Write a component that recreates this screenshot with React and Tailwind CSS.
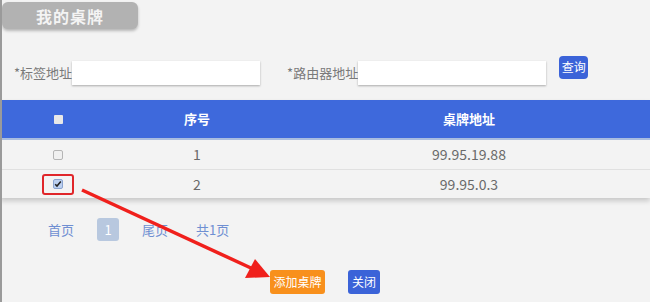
import React from "react";

export default function App() {
  const font = { fontFamily: '"Noto Sans CJK SC", "Noto Sans", sans-serif' };
  return (
    <div
      className="relative w-[650px] h-[302px] overflow-hidden bg-[#f3f3f3] border-l-2 border-[#9a9a9a]"
      style={font}
    >
      {/* title tab */}
      <div className="pt-[2px]">
        <div className="w-[136px] h-[27px] rounded-[6px] bg-[#b2b2b2] shadow-[0_2px_3px_rgba(0,0,0,0.25)] flex items-center justify-center">
          <span className="text-[16px] font-bold text-[#f4f4f4] leading-none tracking-[1px]">我的桌牌</span>
        </div>
      </div>

      {/* search row */}
      <div className="flex items-center mt-[28px] pl-[12px] h-[30px]">
        <span className="text-[13px] text-[#7a7a7a] leading-none">*标签地址</span>
        <div className="w-[188px] h-[24px] bg-white shadow-[0_1px_2px_rgba(0,0,0,0.3)] mt-[2px]" />
        <span className="ml-[27px] text-[13px] text-[#7a7a7a] leading-none">*路由器地址</span>
        <div className="w-[188px] h-[24px] bg-white shadow-[0_1px_2px_rgba(0,0,0,0.3)] mt-[2px]" />
        <div className="ml-[13px] -mt-[10px] w-[29px] h-[23px] rounded-[4px] bg-[#3b63d8] flex items-center justify-center">
          <span className="text-[12px] text-white leading-none">查询</span>
        </div>
      </div>

      {/* table */}
      <div className="mt-[13px] -ml-[2px] shadow-[0_3px_5px_rgba(0,0,0,0.18)]">
        <div className="grid grid-cols-[116px_162px_1fr] h-[40px] bg-[#3e69dc] items-center border-b-2 border-[#a9bde0]">
          <div className="flex justify-center">
            <div className="w-[9px] h-[9px] bg-[#e8e8e8] rounded-[1px]" />
          </div>
          <div className="text-center text-[13px] font-bold text-white">序号</div>
          <div className="text-center text-[13px] font-bold text-white pl-[10px]">桌牌地址</div>
        </div>
        <div className="grid grid-cols-[116px_162px_1fr] h-[30px] items-center bg-[#f3f3f3] border-b border-[#e0e0e0]">
          <div className="flex justify-center">
            <div className="w-[10px] h-[10px] bg-[#f0f0f0] border border-[#b5b5b5] rounded-[2px]" />
          </div>
          <div className="text-center text-[14px] text-[#6a6a6a]">1</div>
          <div className="text-center text-[14px] text-[#6a6a6a] pl-[10px]">99.95.19.88</div>
        </div>
        <div className="grid grid-cols-[116px_162px_1fr] h-[28px] items-center bg-[#f3f3f3]">
          <div className="flex justify-center">
            <div className="w-[32px] h-[21px] border-2 border-[#e0262a] rounded-[3px] flex items-center justify-center">
              <div className="w-[10px] h-[10px] bg-[#bcd0f0] border border-[#8aa4d0] rounded-[2px] flex items-center justify-center">
                <svg width="8" height="8" viewBox="0 0 8 8">
                  <path d="M1.2 4.2 L3 6 L6.8 1.6" stroke="#222" strokeWidth="1.6" fill="none" />
                </svg>
              </div>
            </div>
          </div>
          <div className="text-center text-[14px] text-[#6a6a6a]">2</div>
          <div className="text-center text-[14px] text-[#6a6a6a] pl-[10px]">99.95.0.3</div>
        </div>
      </div>

      {/* pagination */}
      <div className="flex items-center mt-[20px] pl-[46px] h-[23px] text-[13px] text-[#6f8fd2]">
        <span>首页</span>
        <div className="ml-[23px] w-[22px] h-[23px] rounded-[3px] bg-[#b8c8df] flex items-center justify-center text-white">1</div>
        <span className="ml-[23px]">尾页</span>
        <span className="ml-[28px]">共1页</span>
      </div>

      {/* buttons */}
      <div className="flex items-center mt-[29px] pl-[268px]">
        <div className="w-[55px] h-[24px] rounded-[3px] bg-[#f8901c] flex items-center justify-center">
          <span className="text-[12px] text-white leading-none">添加桌牌</span>
        </div>
        <div className="ml-[23px] w-[32px] h-[24px] rounded-[3px] bg-[#3b63d8] flex items-center justify-center">
          <span className="text-[12px] text-white leading-none">关闭</span>
        </div>
      </div>

      {/* red arrow annotation */}
      <svg className="absolute left-0 top-0 pointer-events-none" width="650" height="302">
        <line x1="80" y1="190" x2="250" y2="268.5" stroke="#f0201c" strokeWidth="3.5" />
        <polygon points="268,277 243,278 253,259" fill="#f0201c" />
      </svg>
    </div>
  );
}
